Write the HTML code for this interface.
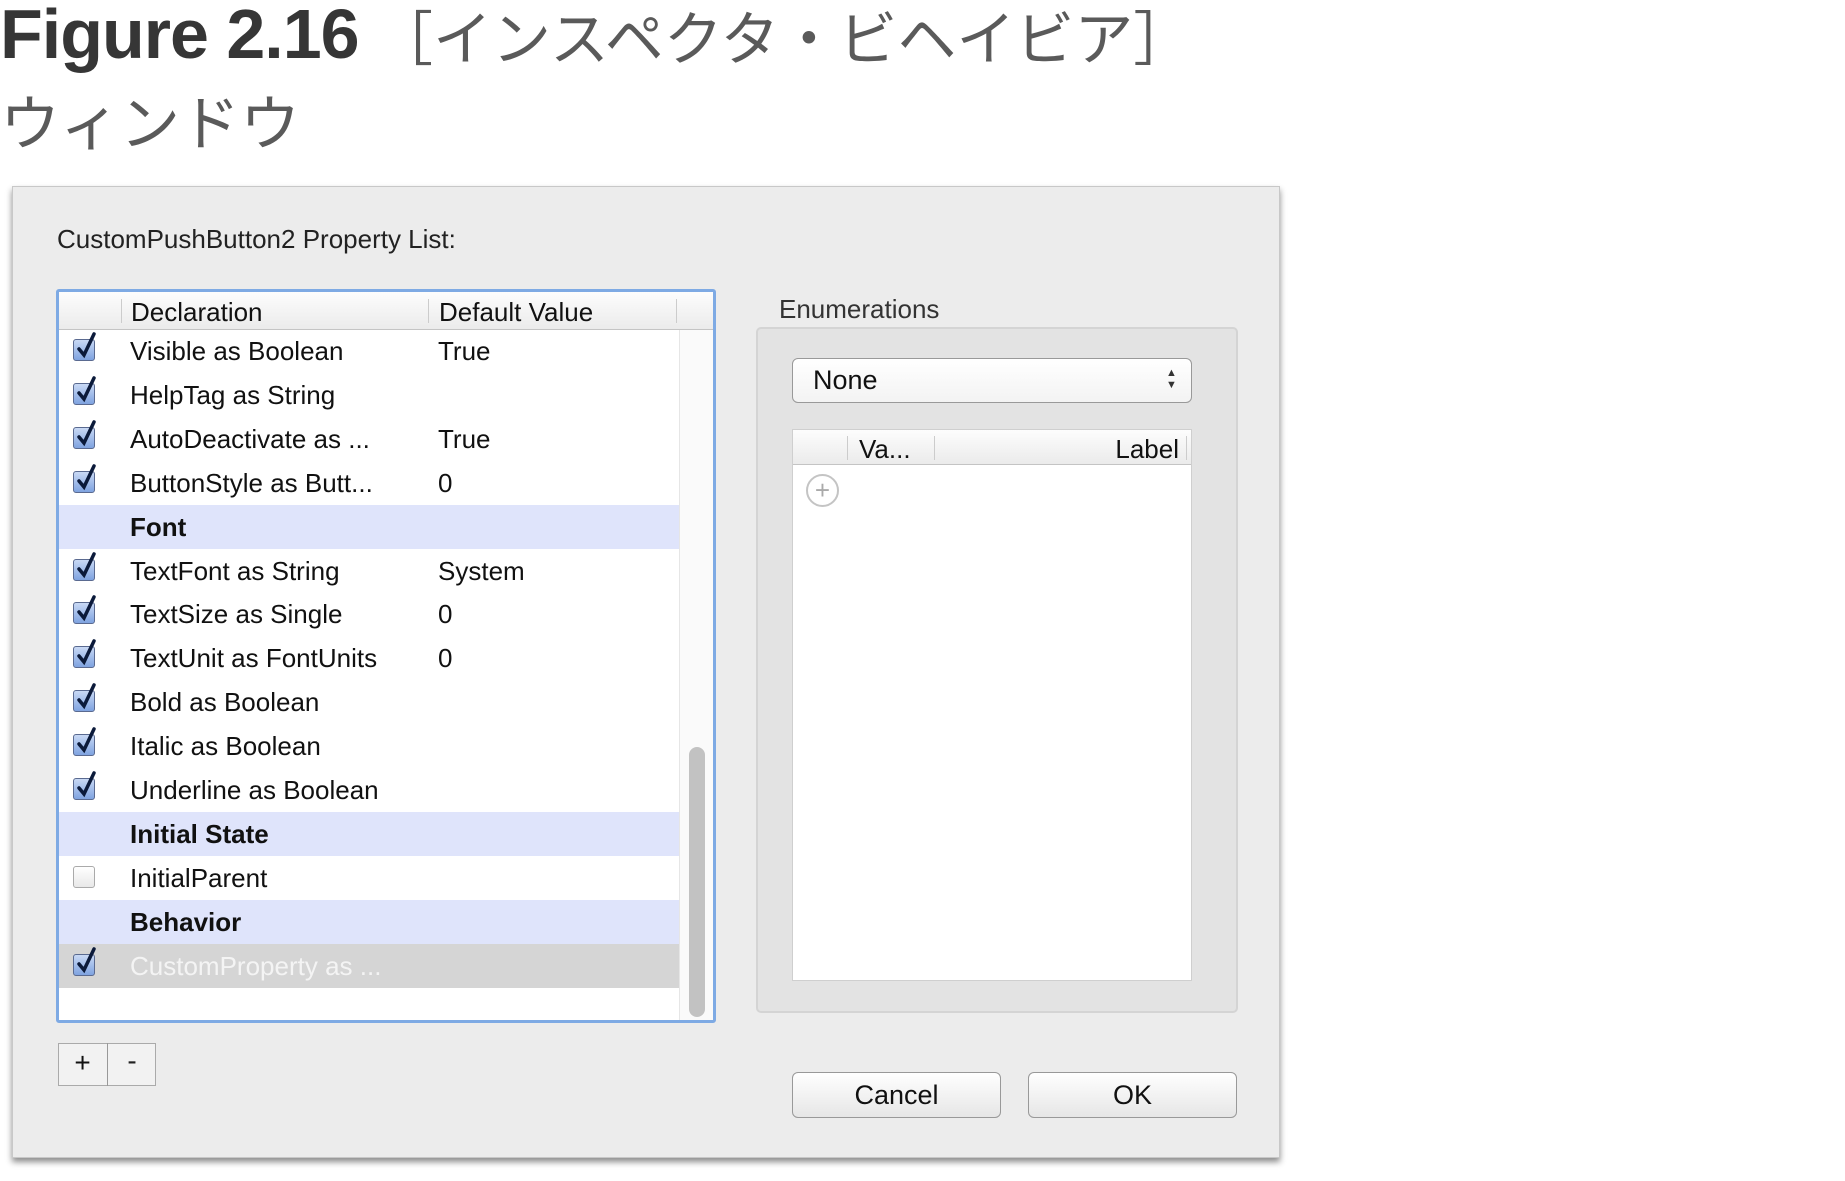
<!DOCTYPE html>
<html><head><meta charset="utf-8"><style>
*{margin:0;padding:0;box-sizing:border-box}
body{width:1845px;height:1181px;background:#fff;position:relative;overflow:hidden;font-family:"Liberation Sans","Noto Sans CJK JP",sans-serif}
.a{position:absolute}
.t{white-space:nowrap}
.row{position:absolute;left:3px;width:620px;height:44px;font-size:26px;color:#111;line-height:44px}
.row .d{position:absolute;left:71px}
.row .v{position:absolute;left:379px}
.cb{position:absolute;left:14px;top:10px;width:22px;height:22px;border:1px solid #5a6a90;border-radius:3px;background:linear-gradient(#c9d9f5,#7fa3e0)}
.cb svg{position:absolute;left:1px;top:-9px}
.grp{background:#dfe4fb;font-weight:bold}
.btn{position:absolute;background:linear-gradient(#fff,#f0f0f0 60%,#e6e6e6);border:1px solid #999;border-radius:6px;font-size:27px;text-align:center;color:#111}
</style></head><body>
<div class="a t" style="left:0;top:-6px;font-size:70px;font-weight:bold;color:#363636;letter-spacing:-1px">Figure 2.16</div>
<div class="a t" style="left:374px;top:-8px;font-size:59px;color:#5a5a5a;font-family:'Noto Sans CJK JP',sans-serif">［インスペクタ・ビヘイビア］</div>
<div class="a t" style="left:0;top:76px;font-size:60px;color:#5a5a5a;font-family:'Noto Sans CJK JP',sans-serif">ウィンドウ</div>

<div class="a" style="left:12px;top:186px;width:1268px;height:972px;background:#ececec;border:1px solid #c8c8c8;box-shadow:0 4px 6px rgba(0,0,0,.45)"></div>
<div class="a t" style="left:57px;top:224px;font-size:26px;color:#222">CustomPushButton2 Property List:</div>

<div class="a" style="left:56px;top:289px;width:660px;height:734px;border:3px solid #7eaae4;border-radius:3px;background:#fff;overflow:hidden">
  <div class="a" style="left:0;top:0;width:654px;height:38px;background:linear-gradient(#fdfdfd,#ebebeb);border-bottom:1px solid #c4c4c4;font-size:26px;line-height:40px;color:#111">
    <div class="a" style="left:62px;top:7px;width:1px;height:24px;background:#ccc"></div>
    <div class="a t" style="left:72px">Declaration</div>
    <div class="a" style="left:369px;top:7px;width:1px;height:24px;background:#ccc"></div>
    <div class="a t" style="left:380px">Default Value</div>
    <div class="a" style="left:617px;top:7px;width:1px;height:24px;background:#ccc"></div>
  </div>
  <div class="a" style="left:620px;top:38px;width:34px;height:700px;background:#fafafa;border-left:1px solid #e6e6e6"></div>
  <div class="a" style="left:630px;top:455px;width:16px;height:270px;background:#c2c2c2;border-radius:8px"></div>
</div>
<div id="rows" class="a" style="left:56px;top:289px;width:656px;height:730px">
</div>
<script>
var R=[["Visible as Boolean","True",1],["HelpTag as String","",1],["AutoDeactivate as ...","True",1],["ButtonStyle as Butt...","0",1],["Font","",2],["TextFont as String","System",1],["TextSize as Single","0",1],["TextUnit as FontUnits","0",1],["Bold as Boolean","",1],["Italic as Boolean","",1],["Underline as Boolean","",1],["Initial State","",2],["InitialParent","",0],["Behavior","",2],["CustomProperty as ...","",3]];
var h="";var chk='<svg width="22" height="30" viewBox="0 0 22 30"><path d="M4 18 L9 24 L19 3" stroke="#0b1a3a" stroke-width="3.5" fill="none" stroke-linecap="round"/></svg>';
R.forEach(function(r,i){var top=40+i*43.9;var cls="row"+(r[2]==2?" grp":"");var st="top:"+top+"px;";if(r[2]==3)st+="background:#d5d5d5;color:#f4f4f4;";
h+='<div class="'+cls+'" style="'+st+'">';
if(r[2]==1||r[2]==3)h+='<div class="cb">'+chk+'</div>';
if(r[2]==0)h+='<div class="cb" style="background:linear-gradient(#fff,#e8e8e8);border-color:#aaa"></div>';
h+='<span class="d t">'+r[0]+'</span><span class="v t">'+r[1]+'</span></div>';});
document.getElementById("rows").innerHTML=h;
</script>

<div class="a" style="left:58px;top:1043px;width:98px;height:43px;border:1px solid #aaa;background:#f2f2f2"></div>
<div class="a" style="left:107px;top:1043px;width:1px;height:43px;background:#999"></div>
<div class="a t" style="left:58px;top:1047px;width:49px;text-align:center;font-size:28px;color:#111">+</div>
<div class="a t" style="left:108px;top:1045px;width:48px;text-align:center;font-size:28px;color:#222">-</div>

<div class="a t" style="left:779px;top:294px;font-size:26px;color:#333">Enumerations</div>
<div class="a" style="left:756px;top:327px;width:482px;height:686px;background:#e3e3e3;border:2px solid #d4d4d4;border-radius:5px"></div>
<div class="a" style="left:792px;top:358px;width:400px;height:45px;background:linear-gradient(#fff,#f3f3f3);border:1px solid #999;border-radius:6px;font-size:27px;line-height:43px;color:#111">
  <span class="a t" style="left:20px">None</span>
  <span class="a" style="left:373px;top:8px;font-size:11px;line-height:12px;color:#333">▲<br>▼</span>
</div>
<div class="a" style="left:792px;top:429px;width:400px;height:552px;background:#fff;border:1px solid #cfcfcf">
  <div class="a" style="left:0;top:0;width:398px;height:35px;background:linear-gradient(#fdfdfd,#ebebeb);border-bottom:1px solid #c4c4c4;font-size:26px;line-height:38px;color:#111">
    <div class="a" style="left:54px;top:6px;width:1px;height:24px;background:#ccc"></div>
    <span class="a t" style="left:66px">Va...</span>
    <div class="a" style="left:141px;top:6px;width:1px;height:24px;background:#ccc"></div>
    <span class="a t" style="right:12px">Label</span>
    <div class="a" style="left:393px;top:6px;width:1px;height:24px;background:#ccc"></div>
  </div>
  <div class="a" style="left:13px;top:44px;width:33px;height:33px;border:2px solid #c4c4c4;border-radius:50%;color:#aaa;font-size:26px;line-height:28px;text-align:center">+</div>
</div>

<div class="btn" style="left:792px;top:1072px;width:209px;height:46px;line-height:44px">Cancel</div>
<div class="btn" style="left:1028px;top:1072px;width:209px;height:46px;line-height:44px">OK</div>
</body></html>
